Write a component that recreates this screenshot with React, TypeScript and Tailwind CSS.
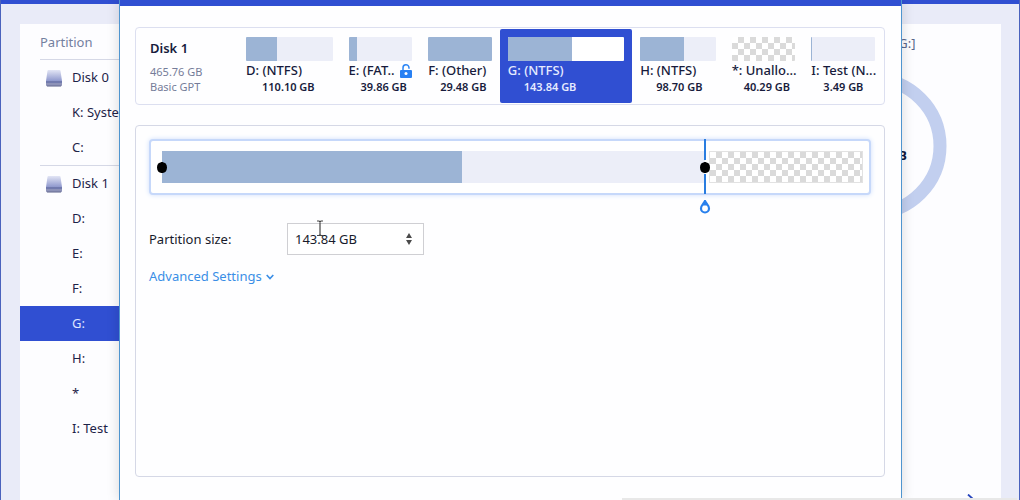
import { useState } from "react";

type Partition = { name: string; size: string; used: string; wide?: boolean; locked?: boolean; kind?: "active" | "free" };

const partitions: Partition[] = [
  { name: "D: (NTFS)", size: "110.10 GB", used: "36%", wide: true },
  { name: "E: (FAT..", size: "39.86 GB", used: "13%", locked: true },
  { name: "F: (Other)", size: "29.48 GB", used: "100%" },
  { name: "G: (NTFS)", size: "143.84 GB", used: "55%", wide: true, kind: "active" },
  { name: "H: (NTFS)", size: "98.70 GB", used: "58%", wide: true },
  { name: "*: Unallo...", size: "40.29 GB", used: "0%", kind: "free" },
  { name: "I: Test (N...", size: "3.49 GB", used: "1px" },
];

const tree = [
  { label: "Disk 0", disk: true },
  { label: "K: Syste" },
  { label: "C:" },
  { label: "Disk 1", disk: true },
  { label: "D:" },
  { label: "E:" },
  { label: "F:" },
  { label: "G:", active: true },
  { label: "H:" },
  { label: "*" },
  { label: "I: Test" },
];

const checker = "bg-white bg-[conic-gradient(#dadada_25%,transparent_0_50%,#dadada_0_75%,transparent_0)] bg-size-[12px_12px]";

const thumb =
  "pointer-events-none absolute -inset-x-1.5 top-0 h-full appearance-none bg-transparent outline-none [&::-webkit-slider-thumb]:pointer-events-auto [&::-webkit-slider-thumb]:h-[11px] [&::-webkit-slider-thumb]:w-3 [&::-webkit-slider-thumb]:appearance-none [&::-webkit-slider-thumb]:rounded-full [&::-webkit-slider-thumb]:border-x [&::-webkit-slider-thumb]:border-transparent [&::-webkit-slider-thumb]:bg-black [&::-webkit-slider-thumb]:bg-clip-padding";

function DiskIcon() {
  return (
    <svg viewBox="0 0 16 18" className="h-[18px] w-4 shrink-0" aria-hidden="true">
      <defs>
        <linearGradient id="disk" x1="0" y1="0" x2="0" y2="1">
          <stop offset="0" stopColor="#e2e5f5" />
          <stop offset="1" stopColor="#8f98cd" />
        </linearGradient>
      </defs>
      <path d="M2.500 1h11q.8 0 1 .8L16 12H0L1.500 1.800q.2-.8 1-.8z" fill="url(#disk)" />
      <path d="M0 12h16v4q0 1.300-1.300 1.300H1.300Q0 17.300 0 16z" fill="#8d92b8" />
      <path d="M0 12h16v2H0z" fill="#717aae" />
      <path d="M1 17h14" stroke="#5b6087" strokeWidth=".8" />
    </svg>
  );
}

function LockIcon() {
  return (
    <svg viewBox="0 0 12 14" className="h-3.5 w-3 shrink-0" aria-hidden="true">
      <path d="M3 6.500V4a3 3 0 0 1 6-.3v1" fill="none" stroke="#2d86f5" strokeWidth="1.500" />
      <rect y="6" width="12" height="8" rx="1" fill="#2880f3" />
      <circle cx="6" cy="9.500" r="1.500" fill="#fff" />
    </svg>
  );
}

function Sidebar() {
  return (
    <nav className="w-[200px] shrink-0 text-[13px] text-[#1d2348]">
      <h2 className="ml-5 flex h-9 items-center border-b border-[#d5d8e6] pt-0.5 text-[#7480a0]">Partition</h2>
      <ul>
        {tree.map((item, i) => (
          <li key={item.label} className={item.active ? "bg-[#304fd2] text-[#dfe5ff]" : ""}>
            {item.disk && i > 0 && <hr className="ml-5 border-[#d5d8e6]" />}
            <a href="#" className="flex h-[35px] items-center gap-2.5 pl-[26px]">
              {item.disk ? <DiskIcon /> : <span className="w-4" />}
              {item.label}
            </a>
          </li>
        ))}
      </ul>
    </nav>
  );
}

function PartitionTile({ p }: { p: Partition }) {
  const active = p.kind === "active";
  return (
    <button
      className={`flex min-w-0 flex-col px-2 pt-2 text-left whitespace-nowrap ${active ? "rounded-[2px] bg-[#304fd2] text-[#e6ebff]" : "text-[#171b3c]"}`}
    >
      <span className={`h-6 w-full overflow-hidden rounded-[1px] ${p.kind === "free" ? checker : active ? "bg-white" : "bg-[#eceef8]"}`}>
        <span className="block h-full bg-[#9cb4d5]" style={{ width: p.used }} />
      </span>
      <span className="flex h-[18px] w-full items-center justify-between pt-0.5 text-[13px] font-medium">
        {p.name}
        {p.locked && <LockIcon />}
      </span>
      <span className={`text-[11px] leading-4 font-semibold ${p.wide ? "pl-4" : "pl-3"}`}>{p.size}</span>
    </button>
  );
}

function ResizeBar() {
  const [start, setStart] = useState(0);
  const [end, setEnd] = useState(775);
  return (
    <div className="rounded-[4px] border-2 border-[#c6d8fa] bg-white pr-1.5 pl-[11px] shadow-[0_0_5px_#cfdffb]">
      <div className="relative my-2.5 flex h-8">
        <div className="w-[42.8%] bg-[#9cb4d5]" />
        <div className="grow bg-[#eceef8]" />
        <div className={`ml-1 w-[22%] border border-[#e2e2e2] ${checker}`} />
        <div className="pointer-events-none absolute -top-3 flex w-4 -translate-x-1/2 flex-col items-center" style={{ left: `${end / 10}%` }}>
          <span className="h-[21px] w-0.5 bg-[#2a7de0]" />
          <span className="h-3.5" />
          <span className="h-5 w-0.5 bg-[#2a7de0]" />
          <svg viewBox="0 0 12 14" className="mt-1.5 h-3.5 w-3" aria-hidden="true">
            <path d="M6 1C5 3.500 2 5.300 2 8.500a4 4 0 0 0 8 0C10 5.300 7 3.500 6 1z" fill="#fff" stroke="#2880ed" strokeWidth="2.200" />
            <path d="M6 1L3 5.500h6z" fill="#2880ed" />
          </svg>
        </div>
        <input aria-label="Partition start" type="range" min={0} max={1000} value={start} onChange={(e) => setStart(+e.target.value)} className={thumb} />
        <input aria-label="Partition end" type="range" min={0} max={1000} value={end} onChange={(e) => setEnd(+e.target.value)} className={thumb} />
      </div>
    </div>
  );
}

function SizeField() {
  const [size, setSize] = useState(143.84);
  const step = (d: number) => setSize(+(size + d).toFixed(2));
  return (
    <div className="mt-7 flex items-center text-[13px] text-[#171b2c]">
      <label htmlFor="size" className="w-[138px] pt-0.5">Partition size:</label>
      <div className="relative flex h-8 w-[137px] items-center border border-[#cfcfd3] bg-white">
        <input id="size" value={`${size.toFixed(2)} GB`} readOnly className="w-full min-w-0 bg-transparent pt-0.5 pl-[7px] outline-none" />
        <div className="flex w-6 shrink-0 flex-col gap-0.5 pr-1">
          <button aria-label="Increase" onClick={() => step(1)} className="flex justify-center">
            <svg viewBox="0 0 6 5" className="h-[5px] w-1.5"><path d="M3 0l3 5H0z" fill="#4a4a4a" /></svg>
          </button>
          <button aria-label="Decrease" onClick={() => step(-1)} className="flex justify-center">
            <svg viewBox="0 0 6 5" className="h-[5px] w-1.5"><path d="M3 5l3-5H0z" fill="#4a4a4a" /></svg>
          </button>
        </div>
        <svg viewBox="0 0 8 16" className="pointer-events-none absolute -top-1 left-7 h-4 w-2" aria-hidden="true">
          <path d="M1 1h2l1 .7L5 1h2M4 1.500v13M1 15.500h2l1-.7 1 .7h2" fill="none" stroke="#444" strokeWidth="1.200" />
        </svg>
      </div>
    </div>
  );
}

function ResizeDialog() {
  return (
    <section
      role="dialog"
      aria-label="Resize partition"
      className="absolute inset-y-0 right-[117px] left-[118px] flex flex-col border-x border-[#4f95cf] bg-[#fefeff] shadow-[0_0_12px_#00000026]"
    >
      <div className="h-1.5 shrink-0 bg-[#304fd2]" />
      <div className="flex grow flex-col gap-5 pt-[21px] pr-4 pb-[23px] pl-[15px]">
        <div className="grid h-[78px] shrink-0 grid-cols-[101px_103fr_80fr_80fr_133fr_92fr_80fr_80fr] rounded-[4px] border border-[#dcdff0] p-px">
          <div className="flex flex-col pl-[13px] text-[11px] text-[#757c99]">
            <h1 className="mt-[9px] mb-1.5 text-[13px] leading-5 font-semibold text-[#171b3c]">Disk 1</h1>
            <span className="leading-[15px]">465.76 GB</span>
            <span className="leading-[15px]">Basic GPT</span>
          </div>
          {partitions.map((p) => (
            <PartitionTile key={p.name} p={p} />
          ))}
        </div>
        <div className="grow rounded-[4px] border border-[#d5d8e6] p-[13px]">
          <ResizeBar />
          <SizeField />
          <button className="mt-3 flex items-center gap-1 text-[13px] text-[#3a8ee6]">
            Advanced Settings
            <svg viewBox="0 0 8 6" className="h-1.5 w-2" aria-hidden="true">
              <path d="M.7 1L4 4.500 7.300 1" fill="none" stroke="currentColor" strokeWidth="1.600" />
            </svg>
          </button>
        </div>
      </div>
    </section>
  );
}

export default function App() {
  return (
    <div className="relative flex h-screen flex-col overflow-hidden border-x border-[#4a62bd] bg-[#e9ebf8] font-['Noto_Sans','Open_Sans',sans-serif]">
      <div className="h-1 shrink-0 bg-[#304fd2]" />
      <main className="mt-5 mr-[18px] ml-[19px] flex grow justify-between overflow-hidden bg-[#fdfdff]">
        <Sidebar />
        <aside className="flex w-[202px] shrink-0 flex-col justify-between">
          <div>
            <h2 className="pt-2.5 pl-[67px] text-[13px] text-[#5c688c]">Test [G:]</h2>
            <div className="relative mt-[18px] h-[148px] w-[148px]">
              <svg viewBox="0 0 148 148" className="h-full w-full" aria-hidden="true">
                <circle cx="74" cy="74" r="67" fill="none" stroke="#c2cfef" strokeWidth="13" />
              </svg>
              <span className="absolute top-[74px] right-10 text-[13px] font-bold whitespace-nowrap text-[#10183a]">143.84 GB</span>
            </div>
          </div>
          <svg viewBox="0 0 10 6" className="ml-[168px] h-1.5 w-2.5" aria-hidden="true">
            <path d="M1 .5L7 6" stroke="#2745bd" strokeWidth="1.800" />
          </svg>
        </aside>
      </main>
      <ResizeDialog />
      <div className="absolute right-0.5 bottom-0 left-[61%] h-0.5 bg-[#e8e8e8]" />
    </div>
  );
}
